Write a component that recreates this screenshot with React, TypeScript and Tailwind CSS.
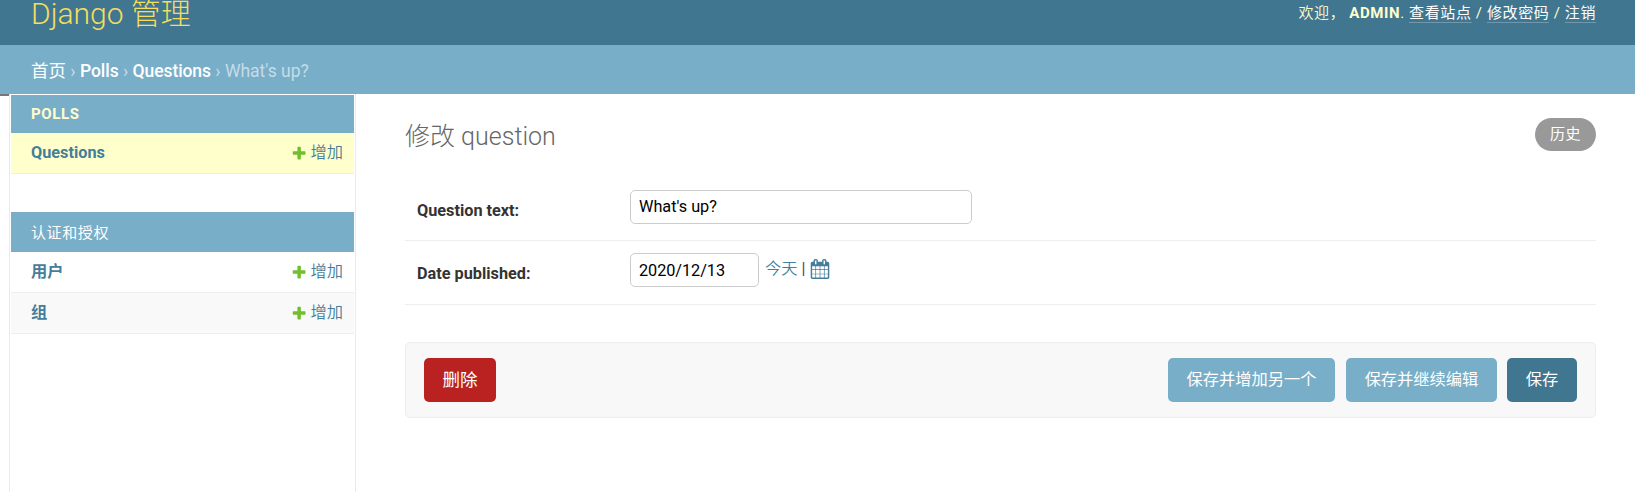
import React from "react";

const PLUS =
  "M1600 796v192q0 40-28 68t-68 28h-416v416q0 40-28 68t-68 28h-192q-40 0-68-28t-28-68v-416h-416q-40 0-68-28t-28-68v-192q0-40 28-68t68-28h416v-416q0-40 28-68t68-28h192q40 0 68 28t28 68v416h416q40 0 68 28t28 68z";
const CALENDAR =
  "M192 1664h288v-288h-288v288zm352 0h320v-288h-320v288zm-352-352h288v-320h-288v320zm352 0h320v-320h-320v320zm-352-384h288v-288h-288v288zm736 736h320v-288h-320v288zm-384-736h320v-288h-320v288zm768 736h288v-288h-288v288zm-384-352h320v-320h-320v320zm-352-864v-288q0-13-9.5-22.5t-22.5-9.5h-64q-13 0-22.5 9.5t-9.5 22.5v288q0 13 9.5 22.5t22.5 9.5h64q13 0 22.5-9.5t9.5-22.5zm736 864h288v-320h-288v320zm-384-384h320v-288h-320v288zm384 0h288v-288h-288v288zm32-480v-288q0-13-9.5-22.5t-22.5-9.5h-64q-13 0-22.5 9.5t-9.5 22.5v288q0 13 9.5 22.5t22.5 9.5h64q13 0 22.5-9.5t9.5-22.5zm384-64v1280q0 52-38 90t-90 38h-1408q-52 0-90-38t-38-90v-1280q0-52 38-90t90-38h128v-96q0-66 47-113t113-47h64q66 0 113 47t47 113v96h384v-96q0-66 47-113t113-47h64q66 0 113 47t47 113v96h128q52 0 90 38t38 90z";

function UserLink({ children }: { children: React.ReactNode }) {
  return (
    <a href="#" className="inline-block h-[19px] border-b border-white/25 leading-[18px] text-white">
      {children}
    </a>
  );
}

function ModelRow({ name, className }: { name: string; className: string }) {
  return (
    <div className={`flex h-[41px] items-center justify-between border-b border-[#eee] pr-[11px] pl-5 text-[16.25px] leading-5 text-[#447e9b] ${className}`}>
      <a href="#" className="font-bold">{name}</a>
      <a href="#" className="flex items-center gap-[3px] font-[350]">
        <svg viewBox="0 0 1792 1792" className="size-[16.25px]" fill="#70bf2b">
          <path d={PLUS} />
        </svg>
        增加
      </a>
    </div>
  );
}

export default function App() {
  return (
    <div className="flex h-[492px] flex-col overflow-hidden bg-white font-[Roboto,'Noto_Sans_CJK_SC',sans-serif] text-[#333]">
      <header className="flex h-[45px] shrink-0 items-start justify-between bg-[#417690] pr-[39px] pl-[31px]">
        <h1 className="text-[30px] leading-[28px] font-light text-[#f5dd5d]">Django 管理</h1>
        <div className="mt-[4px] flex text-[15px] leading-[18px] tracking-[0.6px] whitespace-pre text-[#ffc]">
          <span className="font-[350]">欢迎，</span>
          <strong className="ml-[4px]">ADMIN</strong>
          <span>. </span>
          <UserLink>查看站点</UserLink>
          <span> / </span>
          <UserLink>修改密码</UserLink>
          <span> / </span>
          <UserLink>注销</UserLink>
        </div>
      </header>
      <nav className="flex h-[49px] shrink-0 items-center bg-[#79aec8] pt-[3px] pl-[31px] text-[17.5px] leading-5 whitespace-pre text-[#c4dce8]">
        <a href="#" className="text-white">首页</a>
        <span> › </span>
        <a href="#" className="font-medium tracking-[-0.05px] text-white">Polls</a>
        <span> › </span>
        <a href="#" className="font-medium tracking-[-0.08px] text-white">Questions</a>
        <span> › What's up?</span>
      </nav>
      <div className="flex min-h-0 grow">
        <div className="h-[2px] w-[9px] shrink-0 bg-[#777]" />
        <aside className="w-[347px] shrink-0 border-x border-[#eaeaea] px-px pt-px">
          <div className="flex h-[38px] items-center bg-[#79aec8] pl-5 text-[15px] font-bold tracking-[0.6px] text-[#ffc]">
            POLLS
          </div>
          <ModelRow name="Questions" className="bg-[#ffc]" />
          <div className="mt-[38px] flex h-10 items-center bg-[#79aec8] pt-[2px] pl-5 text-[15px] tracking-[0.6px] text-white">
            认证和授权
          </div>
          <ModelRow name="用户" className="bg-white" />
          <ModelRow name="组" className="bg-[#f9f9f9]" />
        </aside>
        <main className="flex grow flex-col pr-[39px] pl-[49px]">
          <div className="flex h-[83px] items-start justify-between">
            <h2 className="mt-[28px] text-[25px] leading-[30px] font-light text-[#666]">修改 question</h2>
            <a href="#" className="mt-6 flex h-[33px] w-[61px] items-center justify-center rounded-full bg-[#999] pb-px text-[15px] tracking-[0.6px] text-white">
              历史
            </a>
          </div>
          <div className="flex h-[64px] items-start border-b border-[#eee] pt-[13px] pl-[12px]">
            <label className="mt-[11px] w-[213px] text-[16.25px] leading-5 font-bold">Question text:</label>
            <div className="flex h-[34px] w-[342px] items-center rounded-[5px] border border-[#ccc] pl-2 text-[16.25px] text-black">
              What's up?
            </div>
          </div>
          <div className="flex h-[64px] items-start border-b border-[#eee] pt-[12px] pl-[12px]">
            <label className="mt-[11px] w-[213px] text-[16.25px] leading-5 font-bold">Date published:</label>
            <div className="flex h-[34px] w-[129px] items-center rounded-[5px] border border-[#ccc] pt-[2px] pl-2 text-[16.25px] tracking-[-0.05px] text-black">
              2020/12/13
            </div>
            <div className="mt-[6px] ml-[6px] flex h-5 text-[16.25px] leading-5 whitespace-pre">
              <a href="#" className="font-[350] text-[#447e9b]">今天</a>
              <span className="w-[12px] text-center text-[#5b3a5c]">|</span>
              <svg viewBox="0 0 1792 1792" className="size-5" fill="#447e9b">
                <path d={CALENDAR} />
              </svg>
            </div>
          </div>
          <div className="mt-[37px] flex h-[76px] items-center rounded-[5px] border border-[#eee] bg-[#f8f8f8] px-[18px] text-[16.25px] text-white">
            <button className="mr-auto h-11 w-[72px] rounded-[5px] bg-[#ba2121] text-[17.5px]">删除</button>
            <button className="mr-[11px] h-11 w-[167px] rounded-[5px] bg-[#79aec8]">保存并增加另一个</button>
            <button className="mr-[10px] h-11 w-[151px] rounded-[5px] bg-[#79aec8]">保存并继续编辑</button>
            <button className="h-11 w-[70px] rounded-[5px] bg-[#417690]">保存</button>
          </div>
        </main>
      </div>
    </div>
  );
}
